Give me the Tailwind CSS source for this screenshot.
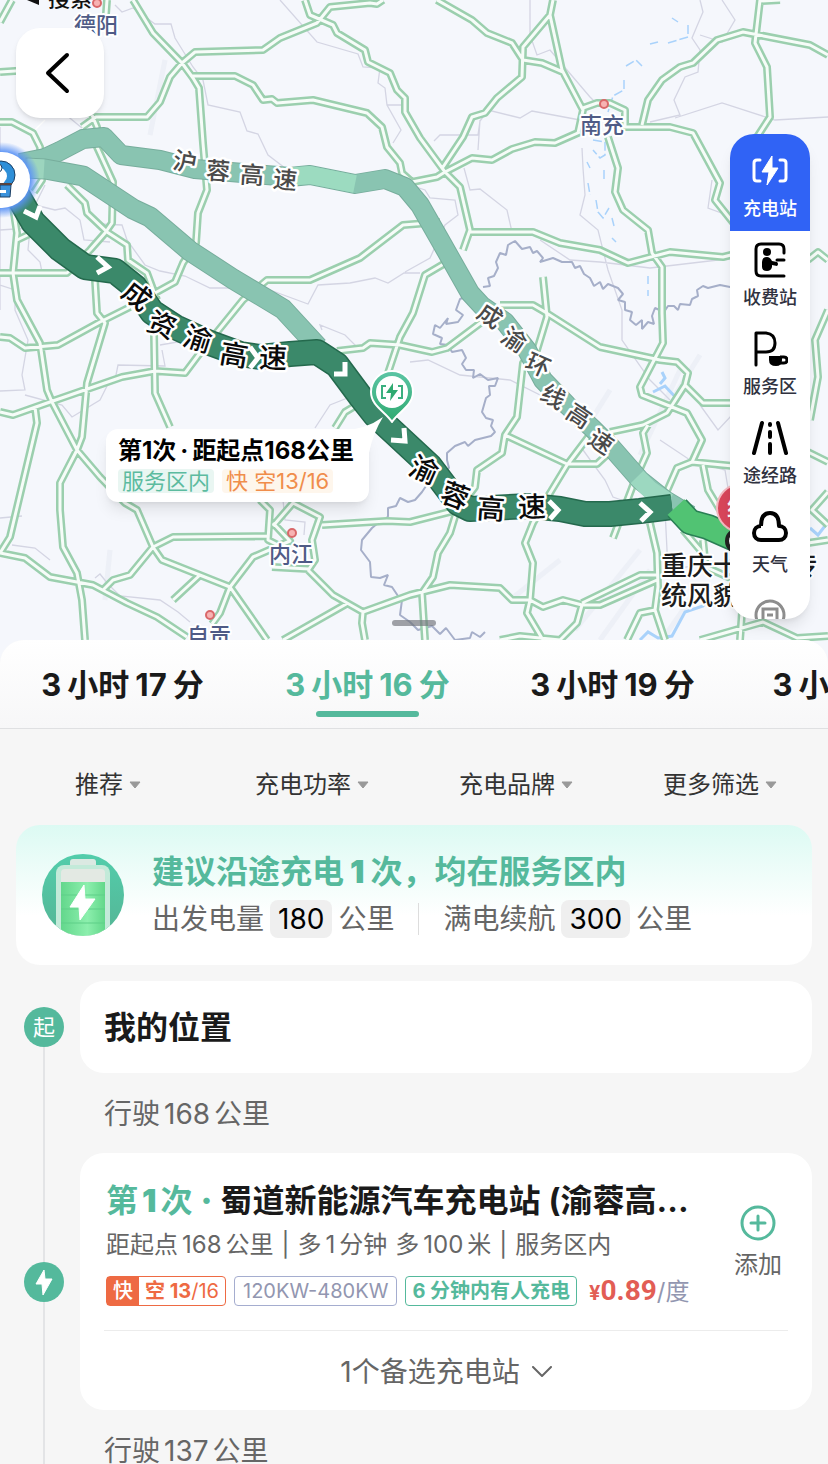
<!DOCTYPE html>
<html lang="zh-CN">
 <head>
  <meta charset="utf-8"/>
  <meta content="width=device-width, initial-scale=1.0" name="viewport"/>
  <title>
   沿途充电站
  </title>
  <script src="https://cdn.jsdelivr.net/npm/@tailwindcss/browser@4"></script>
 </head>
 <body class="flex h-screen flex-col overflow-hidden bg-[#f6f6f6] font-['Inter','Noto_Sans_CJK_SC',sans-serif] text-[#1a1a1a]">
  <!-- Mapa -->
  <section class="relative h-[664px] shrink-0 overflow-hidden bg-[#f5f7fc]">
   <svg aria-label="路线地图" class="absolute inset-0 h-full w-full" preserveAspectRatio="xMidYMin slice" role="img" viewBox="0 0 828 664">
    <defs>
     <path d="M0 22L12 0M133 0L153 33L182 63L193 78L199 88L203 143L207 190L198 213L196 243L183 263L175 282L155 293M0 72L30 70M82 127L96 117H147L160 102L170 77L182 63L195 52L263 50L280 38L317 23L330 7L370 3L377 4L383 0M305 0L310 15L333 25L337 33L365 50L368 62L390 73L397 90L405 98V112L420 138L445 172L460 187L470 230L463 250M192 76H235L253 85L263 100L272 99L277 103L313 100L367 113L382 127L387 147L400 163L402 173L412 182L437 177L445 172L472 158L492 160L512 149L535 142L555 143L580 132M0 122H12L33 133L40 147L42 180L34 192M107 0L106 14M92 115L97 127V147L113 182L112 223L105 233L90 250L67 273H0M67 185L85 203L87 213L107 232L127 245L128 260L147 273L157 300M17 240L38 230M13 207L17 233L13 273L17 300L40 343L47 390L52 402L77 450L100 477L125 503L137 510L153 547L162 560L230 587L267 640M95 280L97 313L105 323L87 383L82 437L77 450L60 483V510L63 547L77 573L82 600L85 640M0 337L10 338L25 348L58 345L100 322L130 307M0 412L13 415L50 402L122 377L155 371L185 373L200 353L243 300L267 280H310L360 258L403 225L440 222M154 333L155 393L170 427M35 407L37 423L10 537L0 553L25 558L50 577L93 585L127 603L157 617L187 637M103 590L113 580L130 575L153 547L173 537L268 536M200 575L173 600M260 500L270 510L268 540L284 548M273 526L293 503L320 517L312 540L315 560L309 569L272 567M273 523L290 541L253 557L230 587L220 613L212 624M308 570L333 595L363 612L362 623L365 640M363 612L410 595L450 585L500 588L512 600H530L543 607L563 600L582 605H600L657 580M582 603L640 575H657M283 640L348 603M322 525L387 521L410 522L457 510L450 533L438 553L433 577L422 593L425 640M463 503L475 487L477 470L502 453L505 435L517 417L523 363L537 350L547 317L543 277M505 435L567 464H597L612 450M610 432L643 425L667 413L685 385L703 403H735M500 305H533L545 312L600 347L660 360L677 362L688 373L685 385M608 137L618 168L615 192L623 210L648 230L652 253L662 267V313L663 343L640 387L642 395L687 413L702 440L692 462L677 468L663 500M648 425L643 433L647 453L635 480L613 538M592 432L567 465L550 493L533 523L525 543L533 563L530 600L527 613L543 640M582 605L577 623L560 640L520 636L500 640M650 523L657 553L658 587L655 610L665 640M627 640L640 613L655 610M692 462L733 466M703 465L708 490L720 510M437 0L472 20L487 33L512 43L523 60L542 63L563 72M553 0L550 15L523 47L522 77L497 98L485 113L472 117L463 137L443 167M550 15L562 70L583 110L578 133M583 108L597 103H610L625 110V127H670L693 133L720 183L715 200L735 225M642 125L648 100L662 80L680 67L693 63L717 40L743 32L810 45L828 55M760 0L755 43L767 67L770 117L757 137M760 1L780 0M470 232H533L560 243L600 250L628 263L670 252L723 257L735 254M808 260L818 252L828 260M447 262L425 275L413 313L400 337L388 373M487 318L447 348L432 352L400 345L370 343L363 348L337 351M365 400L345 412L335 428M828 310L815 340L818 377L810 420M808 452L828 462M808 543L828 540M828 492L812 510L828 525M700 640L763 622L797 638L828 636M740 640L742 612M683 530L700 550L708 568L735 580M703 540L706 570" id="roads"></path>
     <path d="M20 163L45 158L60 151L83 139L104 137L121 155L160 160L195 169L290 177L310 175L355 184L385 179L405 187L420 205L440 240L470 293L482 306L505 322L527 350L543 380L567 405L592 428L612 448L640 480L665 500L690 515" id="alt-north"></path>
     <path d="M25 168L45 169L83 176L133 209L150 217L190 251L233 279L283 309L318 347" id="alt-mid"></path>
     <path d="M18 196L33 222L60 249L85 267L115 271L135 287L152 312L175 327L210 343L240 354L260 357L290 354L317 352L337 365L360 396L375 415L402 440L430 466L458 503L470 509L530 506L560 509L585 514H610L640 511L672 507" id="main-route"></path>
     <linearGradient id="pin" x1="0" x2="0" y1="0" y2="1">
      <stop offset="0" stop-color="#5cc5a5"></stop>
      <stop offset="1" stop-color="#2faa70"></stop>
     </linearGradient>
     <radialGradient id="glow">
      <stop offset=".72" stop-color="#5b93f5"></stop>
      <stop offset="1" stop-color="#5b93f5" stop-opacity="0"></stop>
     </radialGradient>
    </defs>
    <!-- relieve -->
    <g fill="none" opacity=".5" stroke="#e6e9f1" stroke-width="5">
     <path d="M165 60L158 95L150 135M610 390L585 430M680 370L640 455M700 355L675 395M560 560L510 600M640 550L575 630M650 570L600 640M690 600L655 650M110 550L105 600"></path>
    </g>
    <g fill="none" stroke="#d4d5e3" stroke-width="1.3">
     <path d="M115 5L122 12L133 8L155 24H171L175 38L193 67L203 80L208 105L240 112L247 131L258 134L268 155L285 168M0 127V310M280 0L317 42L358 54L363 67L380 68L378 83L385 88L387 105L401 130L393 143M387 105H402M82 128L60 110M45 185L35 205L55 210L65 208L80 220L84 240L110 242M100 224L122 225L127 240L145 265L160 271L185 276L210 288L243 288M270 290L308 304L318 285L350 283L375 278L388 283L404 273H420M0 230L30 228L28 250L40 262L42 272M0 285L15 290V310L28 340L22 375L25 390L0 391M25 395L62 405L72 417L100 400L110 380M160 345L190 340L200 334M162 350L165 366L118 365L115 380M322 330L320 325L345 335L360 350M315 428L330 405L355 395M0 518L22 516M12 545L35 548L50 560M95 578L100 574L108 584L120 596L160 600L178 612L190 622M530 0V35L537 55L550 50L590 97L596 103M434 141L440 135H478L480 121L488 110L520 118L532 111L580 120M700 0L703 12L692 38L700 50L698 72L685 77L674 100L680 115L650 122M700 35L722 42L735 20L722 0M480 120L478 150M464 168L470 190L480 189L507 210L512 232M540 240L570 260L600 262L650 268L735 258M582 148L583 168L585 195L580 215L598 230L608 270L622 310V340L650 380L670 400M410 185L425 190L430 198L455 200L458 215L445 225L430 258L405 272M675 118L722 103L775 120L828 117M712 180L708 208L735 218M410 362L428 360L460 375L510 380L540 395L550 405M583 450L605 480L613 497L650 510M700 405L718 430L732 415M660 440L690 460L725 470L730 500M283 500L285 520L305 522L304 535M650 478L665 510L668 570L730 560"></path>
     <path d="M45 120L35 130L30 140" stroke="#ffffff"></path>
    </g>
    <!-- límites provinciales -->
    <g fill="none" stroke="#a6afc9" stroke-linejoin="bevel" stroke-width="2">
     <path d="M475 300L468 296L460 299L456 310L463 315L458 322L446 324L448 318L440 328L435 325L433 334L442 338L440 344L448 345L452 352L462 350L466 358L462 364L466 370H474L473 378L480 374L488 380L498 378L495 386H489L490 395L486 398L482 412L486 418L493 420L491 426L495 432L491 436L475 440L468 446L465 442L455 446L447 453V460L449 468L440 474L435 484L426 486L422 492L415 500L408 502L400 498L396 506L388 508V516L385 523H378L372 528L362 540L361 550L370 562L371 577L380 578L388 575L384 585L392 587L398 596L402 600L400 615L410 622L418 630L432 626L440 634L446 628L455 640L470 638L472 632L480 637L485 632M483 287L490 286L488 278L494 276L498 268L496 262L500 253L506 255L508 245L515 241L522 249L530 247L533 253L537 251L543 258L540 262L553 258L562 262L572 262L575 268L580 266L584 274L590 278L594 286L600 282L603 289L608 284L618 288L623 294L618 300L625 302V310L632 312L630 320L636 325L642 320V329L648 322L654 324L652 316L655 308L664 312L668 306H674L678 310L680 304L690 305L692 299L698 296L697 290L703 286L708 288L720 285L735 288"></path>
    </g>
    <g fill="none" stroke="#a9d2fb" stroke-dasharray="9 3" stroke-width="1.5">
     <path d="M672 18L678 22M688 25V37L668 43M650 44L658 42M626 66L636 60L642 66M624 80V90L613 96L608 112M593 140L605 142V155L600 158L593 150M604 170V182M587 162L590 168M588 183L590 195M596 200L598 212L603 218L609 208M612 218L614 226M612 238L616 242M648 276V284M648 290V296"></path>
    </g>
    <g fill="none" stroke="#a9d2fb" stroke-width="3">
     <path d="M662 372L665 378L660 384M653 392L665 386L678 400M640 640L648 632L658 638L672 636L685 612L703 606L710 595M810 528L818 535L828 522"></path>
    </g>
    <use fill="none" href="#roads" stroke="#9bcfae" stroke-linejoin="round" stroke-width="8"></use>
    <use fill="none" href="#roads" stroke="#f6fcf8" stroke-linejoin="round" stroke-width="3"></use>
    <!-- rutas alternativas -->
    <g fill="none" stroke-linejoin="round">
     <use href="#alt-north" stroke="#77ad9c" stroke-width="20"></use>
     <use href="#alt-north" stroke="#89c4b1" stroke-width="18"></use>
     <use href="#alt-mid" stroke="#77ad9c" stroke-width="21"></use>
     <use href="#alt-mid" stroke="#89c4b1" stroke-width="19"></use>
     <path d="M285 177L310 175L355 184" stroke="#9cdbc0" stroke-width="18"></path>
     <path d="M27 168L44 169" stroke="#9cd5be" stroke-width="19"></path>
     <path d="M637 477L650 490L668 502" stroke="#9cd8c0" stroke-width="18"></path>
     <use href="#main-route" stroke="#24694d" stroke-width="26"></use>
     <use href="#main-route" stroke="#3b896a" stroke-width="23"></use>
     <path d="M677 508L690 522L708 527L742 542" stroke="#2a7f55" stroke-width="26"></path>
     <path d="M676 507L690 522L708 527L742 542" stroke="#51c373" stroke-width="23"></path>
    </g>
    <g fill="none" stroke="#ffffff" stroke-width="5">
     <path d="M24 211L36 217L40 206M97 257L108 267L97 273M250 347L258 358L250 368M334 374L345 374V362M391 440L405 441L404 428M549 501L558 510L550 519M640 503L650 512L641 521"></path>
    </g>
    <!-- nombres de carretera -->
    <g class="font-medium" dominant-baseline="central" fill="#4a4a4a" font-size="24" paint-order="stroke" stroke="#ffffff" stroke-linejoin="round" stroke-width="5" text-anchor="middle">
     <text transform="translate(185 162) rotate(10)">沪</text>
     <text transform="translate(218 171) rotate(4)">蓉</text>
     <text transform="translate(252 175) rotate(4)">高</text>
     <text transform="translate(285 180) rotate(6)">速</text>
     <text transform="translate(490 316) rotate(34)">成</text>
     <text transform="translate(514 340) rotate(34)">渝</text>
     <text transform="translate(538 365) rotate(24)">环</text>
     <text transform="translate(553 397) rotate(28)">线</text>
     <text transform="translate(579 416) rotate(34)">高</text>
     <text transform="translate(601 442) rotate(34)">速</text>
    </g>
    <g class="font-medium" dominant-baseline="central" fill="#0a0a0a" font-size="28" paint-order="stroke" stroke="#ffffff" stroke-linejoin="round" stroke-width="5" text-anchor="middle">
     <text transform="translate(137 296) rotate(38)">成</text>
     <text transform="translate(162 325) rotate(22)">资</text>
     <text transform="translate(198 339) rotate(18)">渝</text>
     <text transform="translate(234 355) rotate(10)">高</text>
     <text transform="translate(273 358) rotate(2)">速</text>
     <text transform="translate(424 470) rotate(24)">渝</text>
     <text transform="translate(455 496) rotate(20)">蓉</text>
     <text transform="translate(491 509) rotate(4)">高</text>
     <text transform="translate(532 507) rotate(-2)">速</text>
    </g>
    <!-- ciudades -->
    <g fill="#f7b3b3" stroke="#d9686a" stroke-width="2">
     <circle cx="97" cy="3" r="4"></circle>
     <circle cx="604" cy="104" r="4"></circle>
     <circle cx="292" cy="533" r="4"></circle>
     <circle cx="210" cy="615" r="4"></circle>
    </g>
    <g class="font-medium" dominant-baseline="central" fill="#4f5b86" font-size="22" paint-order="stroke" stroke="#ffffff" stroke-linejoin="round" stroke-width="4" text-anchor="middle">
     <text x="96" y="25">德阳</text>
     <text x="602" y="125">南充</text>
     <text x="291" y="554">内江</text>
     <text x="209" y="636">自贡</text>
    </g>
    <text class="font-medium" fill="#111111" font-size="22" x="48" y="6">搜索</text>
    <path d="M27 0L39 5V0Z" fill="#111111"></path>
    <!-- destino -->
    <circle cx="741" cy="508" fill="#d8455a" r="24" stroke="#f3b9c0" stroke-width="2"></circle>
    <text class="font-medium" fill="#ffffff" font-size="24" text-anchor="middle" x="739" y="516">终</text>
    <circle cx="738" cy="541" fill="#ffffff" r="11" stroke="#222222" stroke-width="4"></circle>
    <g class="font-medium" fill="#1c1c1c" font-size="26" paint-order="stroke" stroke="#ffffff" stroke-linejoin="round" stroke-width="4">
     <text x="661" y="575">重庆十八梯传</text>
     <text x="661" y="605">统风貌区</text>
    </g>
    <!-- origen -->
    <circle cx="2" cy="180" fill="url(#glow)" r="38"></circle>
    <circle cx="2" cy="180" fill="#ffffff" r="28"></circle>
    <circle cx="1" cy="175" fill="#2e8fd8" r="14" stroke="#1b3e63"></circle>
    <ellipse cx="-3" cy="176" fill="#ffffff" rx="10" ry="9"></ellipse>
    <circle cx="-2" cy="168" fill="#ffffff" r="4" stroke="#1b3e63"></circle>
    <path d="M0 185H11L10 197H0Z" fill="#3a92dc" stroke="#1b3e63"></path>
    <path d="M0 184H12" stroke="#59433f" stroke-width="2"></path>
    <path d="M0 190H6V193H0" fill="#ffffff"></path>
    <!-- parada de carga -->
    <path d="M392 422C386 412 371 406 371 392A21 21 0 0 1 413 392C413 406 398 412 392 422Z" fill="url(#pin)" stroke="#ffffff" stroke-linejoin="round" stroke-width="2"></path>
    <circle cx="392" cy="392" fill="#ffffff" r="16"></circle>
    <path d="M386 386H382V398H386M398 386H402V398H398" fill="none" stroke="#3bb080" stroke-width="2"></path>
    <path d="M393 383L386 393H391L390 401L398 390H393Z" fill="#2faa70"></path>
    <rect fill="#6f7278" fill-opacity=".65" height="6" rx="3" width="44" x="392" y="620"></rect>
   </svg>
   <button aria-label="返回" class="absolute top-7 left-4 flex h-[90px] w-[88px] items-center justify-center rounded-3xl bg-white shadow-md">
    <svg class="h-12 w-12" fill="none" viewBox="0 0 48 48">
     <path d="M31 6L12 24L31 42" stroke="#000000" stroke-linecap="round" stroke-linejoin="round" stroke-width="4"></path>
    </svg>
   </button>
   <a class="absolute top-[429px] left-[106px] flex h-[73px] w-[263px] flex-col gap-1 rounded-xl bg-white px-3 pt-2 shadow-lg" href="#stop-1">
    <svg class="absolute -top-3 right-[-14px] h-9 w-10" viewBox="0 0 40 36">
     <path d="M0 13Q22 13 40 0Q30 16 26 36L0 36Z" fill="#ffffff"></path>
    </svg>
    <span class="relative text-2xl leading-7 font-bold whitespace-nowrap text-black">
     第1次<span class="px-1">·</span>距起点168公里
    </span>
    <span class="relative flex gap-2 text-[22px] leading-6 whitespace-nowrap">
     <span class="rounded bg-[#e9f6f2] px-1 text-[#5cbb9f]">服务区内</span>
     <span class="rounded bg-[#fef6ec] px-1 text-[#f08d4b]">快 空13/16</span>
    </span>
   </a>
   <nav class="absolute top-[134px] right-[18px] flex h-[485px] w-20 flex-col overflow-hidden rounded-3xl bg-white text-lg leading-6 font-medium text-[#30323f] shadow-lg">
    <button class="flex h-[97px] shrink-0 flex-col items-center gap-2 bg-[#3063f5] pt-[19px] text-white">
     <svg class="size-9" fill="none" viewBox="0 0 36 36">
      <path d="M8 7H5Q2 7 2 10V25Q2 28 5 28H8M28 7H31Q34 7 34 10V25Q34 28 31 28H28" stroke="currentColor" stroke-linecap="round" stroke-width="3"></path>
      <path d="M20 3L10 19H17L15 32L26 15H20Z" fill="currentColor" stroke="currentColor" stroke-linejoin="round"></path>
     </svg>
     充电站
    </button>
    <button class="flex h-[89px] shrink-0 flex-col items-center gap-2 pt-[11px]">
     <svg class="size-9" fill="none" viewBox="0 0 36 36">
      <path d="M32 11V7Q32 2 27 2H9Q4 2 4 7V29Q4 34 9 34H32" stroke="#000000" stroke-linecap="round" stroke-width="3"></path>
      <circle cx="15" cy="10" fill="#000000" r="4"></circle>
      <path d="M10 20Q10 15 15 15Q18 15 20 19L25 20Q27 22 25 24L20 23V25Q19 29 15 29Q10 29 10 25Z" fill="#000000"></path>
      <path d="M25 18H32" stroke="#000000" stroke-linecap="round" stroke-width="3"></path>
     </svg>
     收费站
    </button>
    <button class="flex h-[89px] shrink-0 flex-col items-center gap-2 pt-[11px]">
     <svg class="size-9" fill="none" viewBox="0 0 36 36">
      <path d="M4 34V2H14Q23 3 23 12Q23 21 14 21H4" stroke="#000000" stroke-linecap="round" stroke-linejoin="round" stroke-width="3"></path>
      <path d="M17 25H30V29Q30 35 24 35Q17 35 17 29Z" fill="#000000"></path>
      <path d="M28 26H32Q35 26 35 29Q35 32 32 32H28" stroke="#000000" stroke-width="3"></path>
     </svg>
     服务区
    </button>
    <button class="flex h-[89px] shrink-0 flex-col items-center gap-2 pt-[11px]">
     <svg class="size-9" fill="none" viewBox="0 0 36 36">
      <path d="M10 3L2 33M26 3L34 33M18 4V5M18 12V17M18 24V33" stroke="#000000" stroke-linecap="round" stroke-width="4"></path>
     </svg>
     途经路
    </button>
    <button class="flex h-[89px] shrink-0 flex-col items-center gap-2 pt-[11px]">
     <svg class="size-9" fill="none" viewBox="0 0 36 36">
      <path d="M9 17C9 9 12 4 18 4S27 9 27 17C31 17 34 20 34 24S31 31 27 31H9C5 31 2 28 2 24S5 17 9 17" stroke="#000000" stroke-linejoin="round" stroke-width="4"></path>
     </svg>
     天气
    </button>
    <button aria-label="回程" class="flex shrink-0 flex-col items-center pt-[11px]">
     <svg class="size-9" fill="none" viewBox="0 0 36 36">
      <circle cx="18" cy="17" r="14" stroke="#8d8d8d" stroke-width="3"></circle>
      <path d="M11 26V11H25V26M15 17H21" stroke="#8d8d8d" stroke-width="3"></path>
     </svg>
    </button>
   </nav>
  </section>
  <!-- Panel inferior -->
  <main class="relative -mt-6 flex min-h-0 flex-1 flex-col overflow-hidden rounded-t-3xl bg-[#f6f6f6]">
   <nav class="flex h-[89px] shrink-0 overflow-hidden border-b border-[#dfe0e2] bg-linear-to-b from-white to-[#f7f7f8] text-[31px] leading-10 font-bold">
    <button class="flex w-[245px] shrink-0 flex-col items-center gap-1.5 pt-[25px]">
     <span class="flex gap-1.5"><span>3</span><span>小时</span><span>17</span><span>分</span></span>
    </button>
    <button class="flex w-[245px] shrink-0 flex-col items-center gap-1.5 pt-[25px] text-[#55b99c]">
     <span class="flex gap-1.5"><span>3</span><span>小时</span><span>16</span><span>分</span></span>
     <span class="h-1.5 w-[103px] rounded-sm bg-[#55b99c]"></span>
    </button>
    <button class="flex w-[245px] shrink-0 flex-col items-center gap-1.5 pt-[25px]">
     <span class="flex gap-1.5"><span>3</span><span>小时</span><span>19</span><span>分</span></span>
    </button>
    <button class="flex w-[245px] shrink-0 flex-col items-center gap-1.5 pt-[25px]">
     <span class="flex gap-1.5"><span>3</span><span>小时</span><span>22</span><span>分</span></span>
    </button>
   </nav>
   <div class="grid shrink-0 grid-cols-4 px-1.5 pt-10 pb-6 text-2xl leading-8 text-[#333333]">
    <button class="flex items-center justify-center gap-1.5">
     推荐
     <svg class="h-2 w-3" viewBox="0 0 12 8"><path d="M1 1H11L6 7Z" fill="#999999" stroke="#999999" stroke-linejoin="round"></path></svg>
    </button>
    <button class="flex items-center justify-center gap-1.5">
     充电功率
     <svg class="h-2 w-3" viewBox="0 0 12 8"><path d="M1 1H11L6 7Z" fill="#999999" stroke="#999999" stroke-linejoin="round"></path></svg>
    </button>
    <button class="flex items-center justify-center gap-1.5">
     充电品牌
     <svg class="h-2 w-3" viewBox="0 0 12 8"><path d="M1 1H11L6 7Z" fill="#999999" stroke="#999999" stroke-linejoin="round"></path></svg>
    </button>
    <button class="flex items-center justify-center gap-1.5">
     更多筛选
     <svg class="h-2 w-3" viewBox="0 0 12 8"><path d="M1 1H11L6 7Z" fill="#999999" stroke="#999999" stroke-linejoin="round"></path></svg>
    </button>
   </div>
   <section class="mx-4 flex h-[140px] shrink-0 items-center gap-7 rounded-3xl bg-linear-to-b from-[#dcfaf3] to-white to-65% px-[26px]">
    <svg class="size-[82px] shrink-0" viewBox="0 0 82 82">
     <defs>
      <clipPath id="disc"><circle cx="41" cy="41" r="41"></circle></clipPath>
      <linearGradient id="disc-fill" x1="0" x2="0" y1="0" y2="1">
       <stop offset="0" stop-color="#52cdab"></stop>
       <stop offset="1" stop-color="#55b595"></stop>
      </linearGradient>
      <linearGradient id="charge" x1="0" x2="1" y1="0" y2="0">
       <stop offset="0" stop-color="#63d78c"></stop>
       <stop offset=".6" stop-color="#8cefad"></stop>
       <stop offset="1" stop-color="#62d78a"></stop>
      </linearGradient>
     </defs>
     <g clip-path="url(#disc)">
      <rect fill="url(#disc-fill)" height="82" width="82"></rect>
      <rect fill="#dbe9e2" height="12" rx="3" width="26" x="28" y="5"></rect>
      <rect fill="#c3ead9" height="84" rx="8" width="54" x="14" y="11"></rect>
      <rect fill="#e3e9e3" height="80" rx="4" width="44" x="19" y="15"></rect>
      <rect fill="url(#charge)" height="60" width="44" x="19" y="28"></rect>
      <path d="M19 41H63M19 55H63M19 69H63" stroke="#5fcf88"></path>
     </g>
     <path d="M42 31L28 53H37L38 66L53 45H43Z" fill="#ffffff" stroke="#ffffff" stroke-linejoin="round"></path>
    </svg>
    <div class="flex flex-col gap-2 whitespace-nowrap">
     <h1 class="flex text-[32px] leading-10 font-bold text-[#55b99c]">
      建议沿途充电<b class="px-1.5">1</b>次，均在服务区内
     </h1>
     <p class="flex items-center gap-1.5 text-[28px] leading-[38px] text-[#666666]">
      出发电量
      <span class="rounded-lg bg-[#efefef] px-2 text-black">180</span>
      公里
      <span class="mx-[18px] h-8 w-px bg-[#dddddd]"></span>
      满电续航
      <span class="rounded-lg bg-[#efefef] px-2 text-black">300</span>
      公里
     </p>
    </div>
   </section>
   <ol class="mt-4 flex shrink-0 flex-col px-4 text-[#666666]">
    <li class="flex gap-2">
     <div class="flex w-14 shrink-0 flex-col items-center">
      <span class="flex-1"></span>
      <span class="flex size-10 items-center justify-center rounded-full bg-[#54b99c] text-[22px] leading-none text-white">起</span>
      <span class="w-0.5 flex-1 bg-[#e3e4e6]"></span>
     </div>
     <h2 class="flex h-[92px] flex-1 items-center rounded-3xl bg-white px-6 pt-0.5 text-[32px] font-bold text-[#1a1a1a]">
      我的位置
     </h2>
    </li>
    <li class="flex gap-2">
     <div class="flex w-14 shrink-0 justify-center">
      <span class="w-0.5 bg-[#e3e4e6]"></span>
     </div>
     <p class="flex h-20 items-center gap-1 px-6 pt-0.5 text-[28px]"><span>行驶</span><span>168</span><span>公里</span></p>
    </li>
    <li class="flex gap-2" id="stop-1">
     <div class="flex w-14 shrink-0 flex-col items-center">
      <span class="w-0.5 flex-1 bg-[#e3e4e6]"></span>
      <svg class="size-10" viewBox="0 0 40 40">
       <circle cx="20" cy="20" fill="#54b99c" r="20"></circle>
       <path d="M20 8L12 22H18L19 33L28 17H21Z" fill="#ffffff" stroke="#ffffff" stroke-linejoin="round"></path>
      </svg>
      <span class="w-0.5 flex-1 bg-[#e3e4e6]"></span>
     </div>
     <article class="min-w-0 flex-1 rounded-3xl bg-white px-6 pt-[25px]">
      <div class="flex items-center justify-between gap-2">
       <div class="min-w-0 pl-0.5 whitespace-nowrap">
        <h2 class="flex text-[32px] leading-[46px] font-bold text-[#1a1a1a]">
         <span class="text-[#55b99c]">第<b class="px-1">1</b>次</span><b class="px-2 text-[#55b99c]">·</b><span>蜀道新能源汽车充电站</span><span class="pl-2">(渝蓉高...</span>
        </h2>
        <p class="flex gap-1 text-2xl leading-[42px]">
         <span>距起点</span><span>168</span><span>公里</span><span class="px-1">|</span><span>多</span><span>1</span><span>分钟</span><span class="pl-1">多</span><span>100</span><span>米</span><span class="px-1">|</span><span>服务区内</span>
        </p>
        <div class="mt-2 flex h-[34px] items-center gap-2 text-xl leading-7">
         <span class="flex rounded border border-[#ee6a43] text-[#ee6a43]">
          <span class="bg-[#ee6a43] px-1.5 font-medium text-white">快</span>
          <span class="px-1.5"><b>空 13</b>/16</span>
         </span>
         <span class="rounded border border-[#a5adcf] px-2 text-[#9296b0]">120KW-480KW</span>
         <span class="rounded border border-[#55b99c] px-1.5 font-bold text-[#55b99c]">6 分钟内有人充电</span>
         <span class="pl-1 text-2xl text-[#9296b0]"><b class="text-xl text-[#e25d55]">¥</b><b class="font-['Roboto'] text-[28px] text-[#e25d55]">0.89</b>/度</span>
        </div>
       </div>
       <button class="flex shrink-0 flex-col items-center gap-2 px-1.5 text-2xl leading-8">
        <svg class="size-9" fill="none" viewBox="0 0 36 36">
         <circle cx="18" cy="18" r="16" stroke="#55b99c" stroke-width="3"></circle>
         <path d="M18 11V25M11 18H25" stroke="#55b99c" stroke-linecap="round" stroke-width="3"></path>
        </svg>
        添加
       </button>
      </div>
      <button class="mt-[22px] flex h-20 w-full items-center justify-center gap-3 border-t border-[#ececec] pt-0.5 text-[28px]">
       1个备选充电站
       <svg class="h-3 w-5" fill="none" viewBox="0 0 20 12">
        <path d="M1 1L10 10L19 1" stroke="#666666" stroke-linecap="round" stroke-linejoin="round" stroke-width="2"></path>
       </svg>
      </button>
     </article>
    </li>
    <li class="flex gap-2">
     <div class="flex w-14 shrink-0 justify-center">
      <span class="w-0.5 bg-[#e3e4e6]"></span>
     </div>
     <p class="flex h-20 items-center gap-1 px-6 pt-0.5 text-[28px]"><span>行驶</span><span>137</span><span>公里</span></p>
    </li>
   </ol>
  </main>
 </body>
</html>
